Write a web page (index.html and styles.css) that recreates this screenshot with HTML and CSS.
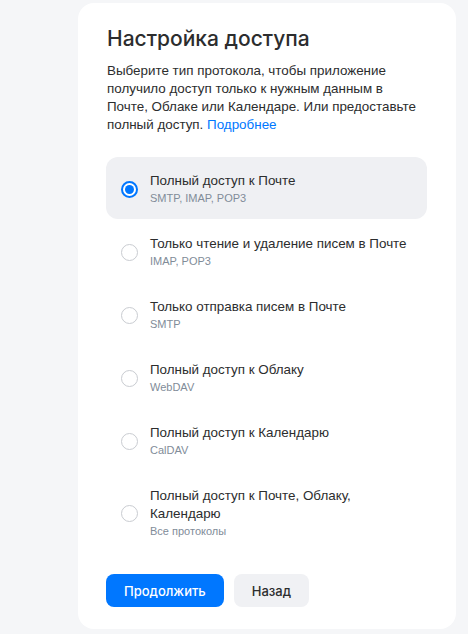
FILE: index.html
```html
<!DOCTYPE html>
<html lang="ru">
<head>
<meta charset="utf-8">
<link rel="stylesheet" href="styles.css">
</head>
<body>
<div class="card">
  <h1 class="title">Настройка доступа</h1>
  <p class="desc">Выберите тип протокола, чтобы приложение получило доступ только к нужным данным в Почте, Облаке или Календаре. Или предоставьте полный доступ. <a class="link" href="#">Подробнее</a></p>
  <div class="options">
    <label class="option selected">
      <span class="radio checked"></span>
      <span class="text"><span class="opt-title">Полный доступ к Почте</span><span class="opt-sub">SMTP, IMAP, POP3</span></span>
    </label>
    <label class="option">
      <span class="radio"></span>
      <span class="text"><span class="opt-title">Только чтение и удаление писем в Почте</span><span class="opt-sub">IMAP, POP3</span></span>
    </label>
    <label class="option">
      <span class="radio"></span>
      <span class="text"><span class="opt-title">Только отправка писем в Почте</span><span class="opt-sub">SMTP</span></span>
    </label>
    <label class="option">
      <span class="radio"></span>
      <span class="text"><span class="opt-title">Полный доступ к Облаку</span><span class="opt-sub">WebDAV</span></span>
    </label>
    <label class="option">
      <span class="radio"></span>
      <span class="text"><span class="opt-title">Полный доступ к Календарю</span><span class="opt-sub">CalDAV</span></span>
    </label>
    <label class="option">
      <span class="radio"></span>
      <span class="text"><span class="opt-title">Полный доступ к Почте, Облаку, Календарю</span><span class="opt-sub">Все протоколы</span></span>
    </label>
  </div>
  <div class="actions">
    <button class="btn primary">Продолжить</button>
    <button class="btn secondary">Назад</button>
  </div>
</div>
</body>
</html>
```

FILE: styles.css
```css
html, body {
  margin: 0;
  padding: 0;
}
body {
  background: #f5f6f8;
  font-family: Arial, "Liberation Sans", sans-serif;
  color: #2c2d2e;
}
.card {
  box-sizing: border-box;
  width: 378px;
  margin: 3px 0 0 78px;
  background: #ffffff;
  border-radius: 16px;
  padding: 22px 29px 22px 28px;
}
.title {
  margin: 0 0 0 1px;
  font-family: Inter, "Liberation Sans", sans-serif;
  font-weight: 500;
  font-size: 21px;
  line-height: 28px;
  color: #2c2d2e;
}
.desc {
  margin: 9px 0 0 1px;
  font-size: 13.4px;
  line-height: 18px;
}
.link {
  color: #0077ff;
  text-decoration: none;
}
.options {
  margin-top: 23px;
  display: flex;
  flex-direction: column;
  gap: 1px;
}
.option {
  display: flex;
  align-items: center;
  gap: 12px;
  padding: 15px 16px 13px 15px;
  border-radius: 12px;
}
.option.selected {
  background: #eff0f3;
}
.radio {
  box-sizing: border-box;
  flex: 0 0 17px;
  width: 17px;
  height: 17px;
  border-radius: 50%;
  border: 1.5px solid #c9ccd1;
  position: relative;
}
.radio.checked {
  border: 2px solid #0077ff;
  background: #ffffff;
}
.radio.checked::after {
  content: "";
  position: absolute;
  left: 2px;
  top: 2px;
  width: 9px;
  height: 9px;
  border-radius: 50%;
  background: #0077ff;
}
.text {
  display: flex;
  flex-direction: column;
}
.opt-title {
  font-size: 13.4px;
  line-height: 18px;
  color: #2c2d2e;
}
.opt-sub {
  font-size: 11px;
  line-height: 16px;
  color: #818c99;
}
.actions {
  display: flex;
  gap: 10px;
  margin-top: 22px;
}
.btn {
  font-family: Inter, "Liberation Sans", sans-serif;
  font-weight: 500;
  font-size: 13px;
  height: 33px;
  border: none;
  border-radius: 8px;
  padding: 0 18px;
  cursor: pointer;
}
.btn.primary {
  background: #0077ff;
  color: #ffffff;
}
.btn.secondary {
  background: #f0f1f4;
  color: #2c2d2e;
}
```
